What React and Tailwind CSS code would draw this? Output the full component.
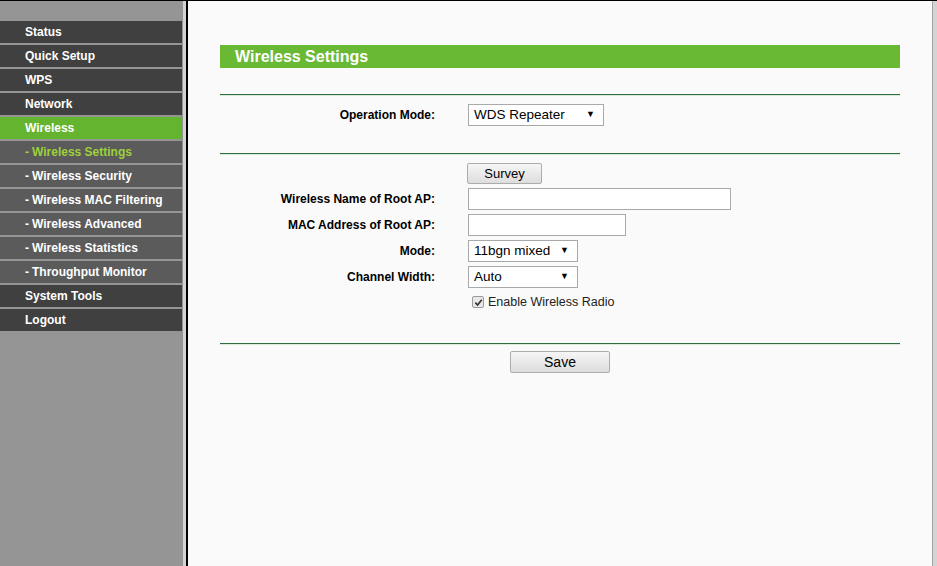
import React from 'react';

const menu = [
  { label: 'Status', type: 'main' },
  { label: 'Quick Setup', type: 'main' },
  { label: 'WPS', type: 'main' },
  { label: 'Network', type: 'main' },
  { label: 'Wireless', type: 'active' },
  { label: 'Wireless Settings', type: 'subActive' },
  { label: 'Wireless Security', type: 'sub' },
  { label: 'Wireless MAC Filtering', type: 'sub' },
  { label: 'Wireless Advanced', type: 'sub' },
  { label: 'Wireless Statistics', type: 'sub' },
  { label: 'Throughput Monitor', type: 'sub' },
  { label: 'System Tools', type: 'main' },
  { label: 'Logout', type: 'main' },
];

const MenuItem = ({ item }) => {
  const bg =
    item.type === 'active' ? 'bg-[#64b42f]' : item.type === 'main' ? 'bg-[#404040]' : 'bg-[#5b5b5b]';
  const color = item.type === 'subActive' ? 'text-[#9ed03a]' : 'text-white';
  const isSub = item.type === 'sub' || item.type === 'subActive';
  return (
    <div className={`h-[22px] w-[182px] ${bg} flex items-center pl-[25px] text-[12px] font-bold ${color}`}>
      {isSub ? <span className="mr-[3px]">-</span> : null}
      {item.label}
    </div>
  );
};

const Divider = () => (
  <div className="w-[680px] border-t border-[#2f6b3f] border-b-[1px] border-b-[#d7ecd9]" />
);

const Select = ({ value, width }) => (
  <div className={`${width} h-[22px] bg-white border border-[#a9a9a9] flex items-center justify-between pl-[5px] pr-[8px] text-[13.5px] text-black`}>
    <span>{value}</span>
    <span className="text-[9px]">▼</span>
  </div>
);

const Row = ({ label, children, h = 'h-[22px]' }) => (
  <div className={`flex items-center ${h}`}>
    <div className="w-[215px] text-right text-[12px] font-bold text-black">{label}</div>
    <div className="ml-[33px] flex items-center">{children}</div>
  </div>
);

const Button = ({ children, width, h }) => (
  <button className={`${width} ${h} border border-[#acacac] rounded-[2px] bg-gradient-to-b from-[#f6f6f6] to-[#dddddd] text-black flex items-center justify-center`}>
    {children}
  </button>
);

export default function App() {
  return (
    <div className="flex h-[566px] w-[937px] overflow-hidden border-t border-black font-['Liberation_Sans',Arial,sans-serif]">
      <aside className="w-[183px] shrink-0 bg-[#959595] pt-[20px] flex flex-col gap-[2px]">
        {menu.map((item, idx) => (
          <MenuItem key={idx} item={item} />
        ))}
      </aside>
      <div className="w-[3px] shrink-0 bg-[#d3d3d3]" />
      <div className="w-[2px] shrink-0 bg-black" />
      <main className="flex-1 bg-[#fafafa] pl-[32px] pt-[44px]">
        <div className="w-[680px] h-[23px] bg-[#6ab934] flex items-center pl-[15px] text-[16px] font-bold text-white">
          Wireless Settings
        </div>
        <div className="mt-[26px]">
          <Divider />
        </div>
        <div className="mt-[8px]">
          <Row label="Operation Mode:">
            <Select value="WDS Repeater" width="w-[136px]" />
          </Row>
        </div>
        <div className="mt-[27px]">
          <Divider />
        </div>
        <div className="mt-[8px] flex flex-col gap-[4px]">
          <Row label="" h="h-[21px]">
            <div className="-ml-[1px]">
              <Button width="w-[75px]" h="h-[21px]">
                <span className="text-[13px]">Survey</span>
              </Button>
            </div>
          </Row>
          <Row label="Wireless Name of Root AP:">
            <div className="w-[263px] h-[22px] bg-white border border-[#a9a9a9]" />
          </Row>
          <Row label="MAC Address of Root AP:">
            <div className="w-[158px] h-[22px] bg-white border border-[#a9a9a9]" />
          </Row>
          <Row label="Mode:">
            <Select value="11bgn mixed" width="w-[110px]" />
          </Row>
          <Row label="Channel Width:">
            <Select value="Auto" width="w-[110px]" />
          </Row>
          <Row label="" h="h-[20px]">
            <div className="flex items-center pl-[4px] gap-[4px]">
              <div className="w-[12px] h-[12px] rounded-[2px] border border-[#9a9a9a] bg-[#e8e8e8] flex items-center justify-center">
                <svg width="9" height="9" viewBox="0 0 10 10">
                  <path d="M1.5 5.2 L4 7.8 L8.6 2" fill="none" stroke="#333" strokeWidth="1.8" />
                </svg>
              </div>
              <span className="text-[12.5px] text-[#222]">Enable Wireless Radio</span>
            </div>
          </Row>
        </div>
        <div className="mt-[31px]">
          <Divider />
        </div>
        <div className="mt-[6px] w-[680px] flex justify-center">
          <Button width="w-[100px]" h="h-[22px]">
            <span className="text-[14px]">Save</span>
          </Button>
        </div>
      </main>
      <div className="w-px shrink-0 bg-[#a3a3a3]" />
      <div className="w-[4px] shrink-0 bg-[#d4d4d4]" />
    </div>
  );
}
